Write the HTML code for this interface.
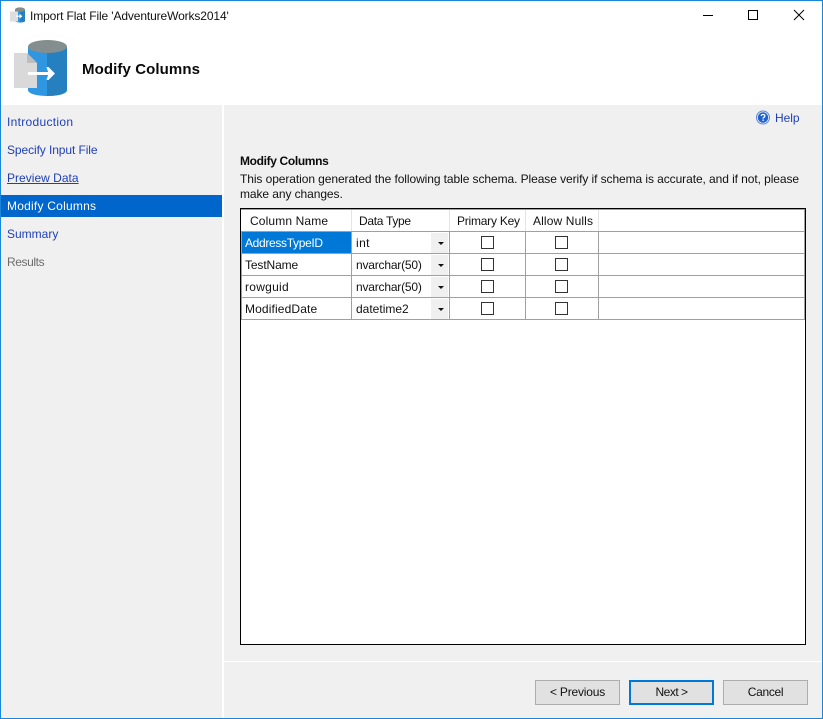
<!DOCTYPE html>
<html><head><meta charset="utf-8">
<style>
html,body{margin:0;padding:0;width:823px;height:719px;overflow:hidden;background:#fff}
body{position:relative;font-family:"Liberation Sans",sans-serif;font-size:12px;color:#000}
div{position:absolute;box-sizing:border-box}
.t{white-space:nowrap;line-height:16px;height:16px}
.nav{left:7px;color:#1f3fb8}
.h{background:#a0a0a0}
.cb{width:13px;height:13px;border:1px solid #333;background:#fff}
.dd{left:431px;width:17px;height:20px;background:#f0f0f0}
.ar{left:438px;width:0;height:0;border-left:3px solid transparent;border-right:3px solid transparent;border-top:3px solid #111}
.btn{top:680px;width:85px;height:25px;background:#e1e1e1;border:1px solid #adadad;text-align:center;line-height:23px;color:#111}
</style></head><body>
<div style="left:1px;top:105px;width:221px;height:613px;background:#f0f0f0"></div>
<div style="left:224px;top:105px;width:598px;height:613px;background:#f0f0f0"></div>
<div style="left:224px;top:661px;width:598px;height:1px;background:#fff"></div>
<div style="left:0;top:0;width:823px;height:719px;border:1px solid #1a86d9"></div>

<svg style="position:absolute;left:10px;top:7px" width="16" height="17" viewBox="0 0 16 17">
<path d="M5 3V14C5 16 15 16 15 14V3Z" fill="#2e97e0"/><path d="M10 3V15.5C12 15.5 15 15 15 14V3Z" fill="#2680c0"/>
<ellipse cx="10" cy="2.6" rx="5" ry="2.2" fill="#848c8c"/>
<rect x="0" y="4.5" width="8" height="10" fill="#dedede"/>
<path d="M6 8.6H9.5V6.8L12.4 9.2L9.5 11.6V9.8H6Z" fill="#fff"/>
</svg>
<div class="t" style="left:30px;top:8px;letter-spacing:-.12px;color:#111">Import Flat File 'AdventureWorks2014'</div>

<svg style="position:absolute;left:703px;top:15px" width="14" height="2"><rect width="10" height="1" y="0" x="0" fill="#000"/></svg>
<div style="left:748px;top:10px;width:10px;height:10px;border:1px solid #000"></div>
<svg style="position:absolute;left:793px;top:9px" width="12" height="12"><path d="M1 1L11 11M11 1L1 11" stroke="#000" stroke-width="1" fill="none"/></svg>

<svg style="position:absolute;left:13px;top:40px" width="55" height="57" viewBox="0 0 55 57">
<path d="M15 6.5V50C15 58 54 58 54 50V6.5Z" fill="#2f97e1"/>
<path d="M34 6.5V56C44 56 54 54 54 50V6.5Z" fill="#2680bf"/>
<ellipse cx="34.5" cy="6.5" rx="19.5" ry="6.5" fill="#858e8e"/>
<path d="M1 13H14L24 23V48H1Z" fill="#d9d9d9"/>
<path d="M14 13V23H24Z" fill="#bdbdbd"/>
<path d="M15 32H35L33.5 27H35.5L42 33.5L35.5 40H33.5L35 35H15Z" fill="#fff"/>
</svg>
<div class="t" style="left:82px;top:60px;font-size:15px;font-weight:bold;line-height:18px;height:18px;letter-spacing:.1px;color:#0a0a0a;transform:translateY(1px)">Modify Columns</div>

<div class="t nav" style="top:114px;letter-spacing:.3px">Introduction</div>
<div class="t nav" style="top:142px;letter-spacing:-.09px">Specify Input File</div>
<div class="t nav" style="top:170px;text-decoration:underline;letter-spacing:.02px">Preview Data</div>
<div style="left:1px;top:195px;width:221px;height:22px;background:#0066cc"></div>
<div class="t" style="left:7px;top:198px;color:#fff;letter-spacing:.23px">Modify Columns</div>
<div class="t nav" style="top:226px;letter-spacing:0">Summary</div>
<div class="t nav" style="top:254px;color:#6d6d6d;letter-spacing:-.4px">Results</div>

<svg style="position:absolute;left:756px;top:110px" width="15" height="15" viewBox="0 0 15 15">
<circle cx="7" cy="7.5" r="6.5" fill="#e4ecf8" stroke="#5f8ad0"/>
<circle cx="7" cy="7.5" r="5.2" fill="#1f62cc"/>
<path d="M5.2 6C5.4 4 9 4 8.9 6C8.8 7.2 7.1 7.2 7.1 8.6" stroke="#fff" stroke-width="1.3" fill="none"/><rect x="6.4" y="9.5" width="1.4" height="1.4" fill="#fff"/>
</svg>
<div class="t" style="left:775px;top:110px;color:#1f3fb8;letter-spacing:-.05px">Help</div>

<div class="t" style="left:240px;top:153px;font-weight:bold;letter-spacing:-.35px;color:#0a0a0a">Modify Columns</div>
<div class="t" style="left:240px;top:171px;letter-spacing:-.08px;color:#111">This operation generated the following table schema. Please verify if schema is accurate, and if not, please</div>
<div class="t" style="left:240px;top:186px;letter-spacing:-.08px;color:#111">make any changes.</div>

<div style="left:240px;top:208px;width:566px;height:437px;background:#fff;border:1px solid #000"></div>
<div style="left:241px;top:209px;width:564px;height:1px;background:#a0a0a0"></div>
<div class="h" style="left:241px;top:231px;width:564px;height:1px"></div>
<div class="h" style="left:241px;top:253px;width:564px;height:1px"></div>
<div class="h" style="left:241px;top:275px;width:564px;height:1px"></div>
<div class="h" style="left:241px;top:297px;width:564px;height:1px"></div>
<div class="h" style="left:241px;top:319px;width:564px;height:1px"></div>
<div class="h" style="left:804px;top:210px;width:1px;height:110px"></div>
<div class="h" style="left:241px;top:232px;width:1px;height:88px"></div>
<div class="h" style="left:351px;top:232px;width:1px;height:88px"></div>
<div class="h" style="left:449px;top:232px;width:1px;height:88px"></div>
<div class="h" style="left:525px;top:232px;width:1px;height:88px"></div>
<div class="h" style="left:598px;top:232px;width:1px;height:88px"></div>
<div style="left:351px;top:210px;width:1px;height:21px;background:#e4e4e4"></div>
<div style="left:449px;top:210px;width:1px;height:21px;background:#e4e4e4"></div>
<div style="left:525px;top:210px;width:1px;height:21px;background:#e4e4e4"></div>
<div style="left:598px;top:210px;width:1px;height:21px;background:#e4e4e4"></div>

<div class="t" style="left:250px;top:213px;letter-spacing:.13px;color:#111">Column Name</div>
<div class="t" style="left:359px;top:213px;letter-spacing:-.3px;color:#111">Data Type</div>
<div class="t" style="left:457px;top:213px;letter-spacing:-.23px;color:#111">Primary Key</div>
<div class="t" style="left:533px;top:213px;letter-spacing:.13px;color:#111">Allow Nulls</div>

<div style="left:242px;top:232px;width:109px;height:21px;background:#0078d7"></div>
<div class="t" style="left:245px;top:235px;color:#fff;letter-spacing:-.33px">AddressTypeID</div>
<div class="t" style="left:245px;top:257px;letter-spacing:-.12px;color:#111">TestName</div>
<div class="t" style="left:245px;top:279px;letter-spacing:.27px;color:#111">rowguid</div>
<div class="t" style="left:245px;top:301px;letter-spacing:.13px;color:#111">ModifiedDate</div>

<div class="t" style="left:356px;top:235px;letter-spacing:.4px;color:#111">int</div>
<div class="t" style="left:356px;top:257px;letter-spacing:-.2px;color:#111">nvarchar(50)</div>
<div class="t" style="left:356px;top:279px;letter-spacing:-.2px;color:#111">nvarchar(50)</div>
<div class="t" style="left:356px;top:301px;letter-spacing:0;color:#111">datetime2</div>

<div class="dd" style="top:233px"></div><div class="ar" style="top:242px"></div>
<div class="dd" style="top:255px"></div><div class="ar" style="top:264px"></div>
<div class="dd" style="top:277px"></div><div class="ar" style="top:286px"></div>
<div class="dd" style="top:299px"></div><div class="ar" style="top:308px"></div>

<div class="cb" style="left:481px;top:236px"></div><div class="cb" style="left:555px;top:236px"></div>
<div class="cb" style="left:481px;top:258px"></div><div class="cb" style="left:555px;top:258px"></div>
<div class="cb" style="left:481px;top:280px"></div><div class="cb" style="left:555px;top:280px"></div>
<div class="cb" style="left:481px;top:302px"></div><div class="cb" style="left:555px;top:302px"></div>

<div class="btn" style="left:535px;letter-spacing:-.2px">&lt; Previous</div>
<div class="btn" style="left:629px;border:2px solid #0078d7;line-height:21px;letter-spacing:-.5px">Next &gt;</div>
<div class="btn" style="left:723px;letter-spacing:-.3px">Cancel</div>
</body></html>
